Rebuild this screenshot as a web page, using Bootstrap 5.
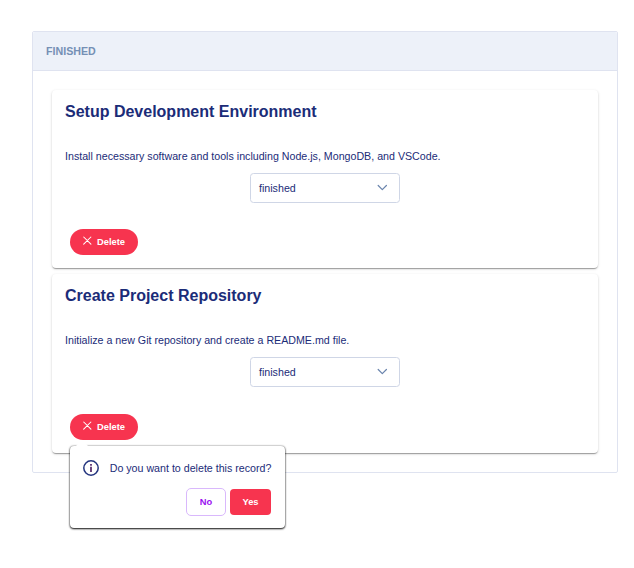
<!DOCTYPE html>
<html lang="en">
<head>
<meta charset="utf-8">
<meta name="viewport" content="width=device-width, initial-scale=1">
<title>Tasks</title>
<link href="https://cdn.jsdelivr.net/npm/bootstrap@5.3.0/dist/css/bootstrap.min.css" rel="stylesheet">
<style>
body{font-family:"Liberation Sans",Arial,sans-serif;font-size:10.66px;line-height:16px;color:#1b2c78;background:#fff}
.board{width:586px;height:442px;margin:31px 0 0 32px;border:1px solid #dfe3f0;border-radius:2px}
.board-head{height:39px;padding:0 13px;background:#edf1f9;border-bottom:1px solid #dfe3f0;color:#7590b5;font-weight:700;border-radius:2px 2px 0 0}
.board-body{padding:19px 19px 0;gap:6px}
.task{height:178px;padding:10px 13px 13px;border-radius:4px;background:#fff;box-shadow:0 2px 1px -1px rgba(0,0,0,.2),0 1px 1px rgba(0,0,0,.14),0 1px 3px rgba(0,0,0,.16)}
.task + .task{height:179px}
.task h2{font-size:16px;line-height:24px;font-weight:700;margin:0 0 24px}
.task p{margin:0 0 9px;line-height:16px}
.status{width:150px;height:30px;padding:0 12px 0 8px;border:1px solid #cfd6e6;border-radius:3.5px}
.act{font-size:9.33px;line-height:14px;font-weight:700;border-radius:4px;padding:0}
.act-del{width:68px;height:26px;border-radius:13px;background:#f7344f;color:#fff;margin:0 0 0 5px;gap:5px}
.act-del:hover{background:#f7344f;color:#fff}
.act-del svg{margin:0 .5px 3px -.5px}
.confirm{left:70px;top:446px;width:215px;height:82px;border-radius:4px;background:#fff;padding:14px 14px 0 13px;box-shadow:0 0 2px rgba(0,0,0,.5),0 1px 2px rgba(0,0,0,.9)}
.confirm::before{content:"";position:absolute;left:6px;top:-6px;border:6px solid transparent;border-top:0;border-bottom-color:#fff}
.confirm-text{margin-left:10.7px}
.act-no{width:40px;height:28px;border:1px solid #d9b8fc;color:#9a10f0;background:#fff;border-radius:5px}
.act-yes{width:41px;height:26px;background:#f7344f;color:#fff}
</style>
</head>
<body>
<section class="board">
  <header class="board-head d-flex align-items-center">FINISHED</header>
  <div class="board-body d-flex flex-column">
    <article class="task d-flex flex-column">
      <h2>Setup Development Environment</h2>
      <p>Install necessary software and tools including Node.js, MongoDB, and VSCode.</p>
      <div class="status d-flex align-items-center justify-content-between align-self-center"><span>finished</span>
        <svg width="10" height="10" viewBox="0 0 10 10" fill="none" stroke="#6a84ad" stroke-width="1.2" stroke-linecap="round" stroke-linejoin="round"><path d="M1.2 2.5 5.3 6.6 9.4 2.5"/></svg></div>
      <button class="btn act act-del border-0 d-flex align-items-center justify-content-center mt-auto"><svg width="9" height="9" viewBox="0 0 9 9" stroke="#fff" stroke-width="1.05" stroke-linecap="round"><path d="m.7 1 7.2 7.2M7.9 1 .7 8.2"/></svg><span>Delete</span></button>
    </article>
    <article class="task d-flex flex-column">
      <h2>Create Project Repository</h2>
      <p>Initialize a new Git repository and create a README.md file.</p>
      <div class="status d-flex align-items-center justify-content-between align-self-center"><span>finished</span>
        <svg width="10" height="10" viewBox="0 0 10 10" fill="none" stroke="#6a84ad" stroke-width="1.2" stroke-linecap="round" stroke-linejoin="round"><path d="M1.2 2.5 5.3 6.6 9.4 2.5"/></svg></div>
      <button class="btn act act-del border-0 d-flex align-items-center justify-content-center mt-auto"><svg width="9" height="9" viewBox="0 0 9 9" stroke="#fff" stroke-width="1.05" stroke-linecap="round"><path d="m.7 1 7.2 7.2M7.9 1 .7 8.2"/></svg><span>Delete</span></button>
    </article>
  </div>
</section>
<div class="confirm position-absolute" role="dialog">
  <div class="d-flex align-items-center"><svg class="flex-shrink-0" width="16" height="16" viewBox="0 0 16 16" fill="none" stroke="#24357f" stroke-width="1.5"><circle cx="8" cy="8" r="7.2"/><path d="M8 6.8v5.2M8 4v1.8" stroke="#5b3272" stroke-width="1.8"/></svg><span class="confirm-text text-nowrap">Do you want to delete this record?</span></div>
  <div class="d-flex align-items-center justify-content-end gap-1 mt-2 pt-1"><button class="btn act act-no">No</button><button class="btn act act-yes border-0">Yes</button></div>
</div>
<script src="https://cdn.jsdelivr.net/npm/bootstrap@5.3.0/dist/js/bootstrap.bundle.min.js"></script>
</body>
</html>
